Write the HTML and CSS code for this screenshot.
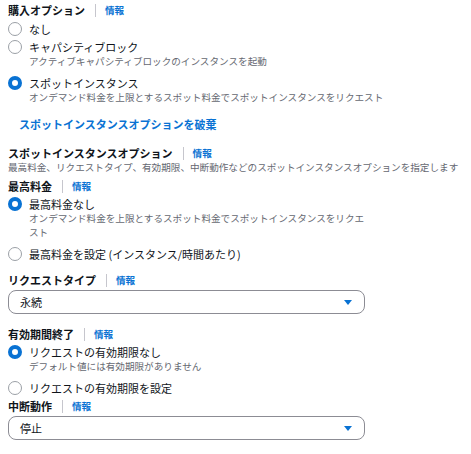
FILE: index.html
```html
<!DOCTYPE html>
<html lang="ja">
<head>
<meta charset="utf-8">
<title>購入オプション</title>
<link rel="stylesheet" href="styles.css">
</head>
<body>
<div class="page">
  <section class="field">
    <div class="head"><span class="title">購入オプション</span><span class="sep"></span><a class="info">情報</a></div>
    <div class="radios">
      <div class="opt"><span class="radio"></span><div class="text"><div class="label">なし</div></div></div>
      <div class="opt has-desc"><span class="radio"></span><div class="text"><div class="label">キャパシティブロック</div><div class="desc">アクティブキャパシティブロックのインスタンスを起動</div></div></div>
      <div class="opt has-desc"><span class="radio on"></span><div class="text"><div class="label">スポットインスタンス</div><div class="desc">オンデマンド料金を上限とするスポット料金でスポットインスタンスをリクエスト</div></div></div>
    </div>
  </section>

  <a class="action">スポットインスタンスオプションを破棄</a>

  <section class="field f-spot">
    <div class="head"><span class="title">スポットインスタンスオプション</span><span class="sep"></span><a class="info">情報</a></div>
    <div class="head-desc">最高料金、リクエストタイプ、有効期限、中断動作などのスポットインスタンスオプションを指定します</div>
  </section>

  <section class="field f-price">
    <div class="head"><span class="title">最高料金</span><span class="sep"></span><a class="info">情報</a></div>
    <div class="radios narrow">
      <div class="opt has-desc"><span class="radio on"></span><div class="text"><div class="label">最高料金なし</div><div class="desc">オンデマンド料金を上限とするスポット料金でスポットインスタンスをリクエスト</div></div></div>
      <div class="opt"><span class="radio"></span><div class="text"><div class="label">最高料金を設定 (インスタンス/時間あたり)</div></div></div>
    </div>
  </section>

  <section class="field f-type">
    <div class="head"><span class="title">リクエストタイプ</span><span class="sep"></span><a class="info">情報</a></div>
    <div class="select"><span>永続</span><svg class="caret" width="8" height="5" viewBox="0 0 8 5"><path d="M0 0H8L4 5Z" fill="#0972d3"/></svg></div>
  </section>

  <section class="field f-expire">
    <div class="head"><span class="title">有効期間終了</span><span class="sep"></span><a class="info">情報</a></div>
    <div class="radios">
      <div class="opt has-desc"><span class="radio on"></span><div class="text"><div class="label">リクエストの有効期限なし</div><div class="desc">デフォルト値には有効期限がありません</div></div></div>
      <div class="opt"><span class="radio"></span><div class="text"><div class="label">リクエストの有効期限を設定</div></div></div>
    </div>
  </section>

  <section class="field f-interrupt">
    <div class="head"><span class="title">中断動作</span><span class="sep"></span><a class="info">情報</a></div>
    <div class="select"><span>停止</span><svg class="caret" width="8" height="5" viewBox="0 0 8 5"><path d="M0 0H8L4 5Z" fill="#0972d3"/></svg></div>
  </section>
</div>
</body>
</html>
```

FILE: styles.css
```css
html, body {
  margin: 0;
  background: #ffffff;
}
body {
  padding: 2px 8px 0;
  font-family: "Noto Sans CJK JP", "Noto Sans", sans-serif;
  color: #0f141a;
}
.page {
  display: flex;
  flex-direction: column;
}
.head {
  display: flex;
  align-items: center;
  height: 16px;
  line-height: 16px;
  font-size: 11px;
  font-weight: 700;
}
.sep {
  width: 1px;
  height: 13px;
  background: #c6c6cd;
  margin: 0 9px 0 10px;
}
.info {
  font-size: 9.6px;
  font-weight: 700;
  color: #0972d3;
}
.radios {
  display: flex;
  flex-direction: column;
  gap: 2px;
  margin-top: 3px;
}
.opt {
  display: grid;
  grid-template-columns: 14px 1fr;
  column-gap: 7px;
  align-items: start;
}
.opt.has-desc + .opt {
  margin-top: 5px;
}
.radio {
  width: 14px;
  height: 14px;
  box-sizing: border-box;
  border: 1.5px solid #9ba0a6;
  border-radius: 50%;
  margin-top: 1px;
}
.radio.on {
  border: 4px solid #0972d3;
}
.label {
  font-size: 11px;
  line-height: 16px;
}
.desc {
  font-size: 9.6px;
  line-height: 14px;
  color: #656871;
  margin-top: -1px;
}
.narrow .desc {
  max-width: 340px;
}
.action {
  margin-top: 12px;
  padding-left: 11px;
  font-size: 11px;
  line-height: 16px;
  font-weight: 700;
  color: #0972d3;
}
.f-spot {
  margin-top: 13px;
}
.head-desc {
  font-size: 9.6px;
  line-height: 12px;
  color: #656871;
  margin-top: 0;
  white-space: nowrap;
}
.f-price {
  margin-top: 5px;
}
.f-price .radios {
  margin-top: 2px;
}
.f-type {
  margin-top: 10px;
}
.f-expire {
  margin-top: 12px;
}
.f-expire .radios {
  margin-top: 2px;
}
.f-interrupt {
  margin-top: 2px;
}
.select {
  display: flex;
  align-items: center;
  justify-content: space-between;
  width: 357px;
  height: 24px;
  box-sizing: border-box;
  margin-top: 2px;
  padding: 0 12px 0 11px;
  border: 1px solid #8c8c94;
  border-radius: 8px;
  font-size: 11px;
}
.caret {
  display: block;
}
```
